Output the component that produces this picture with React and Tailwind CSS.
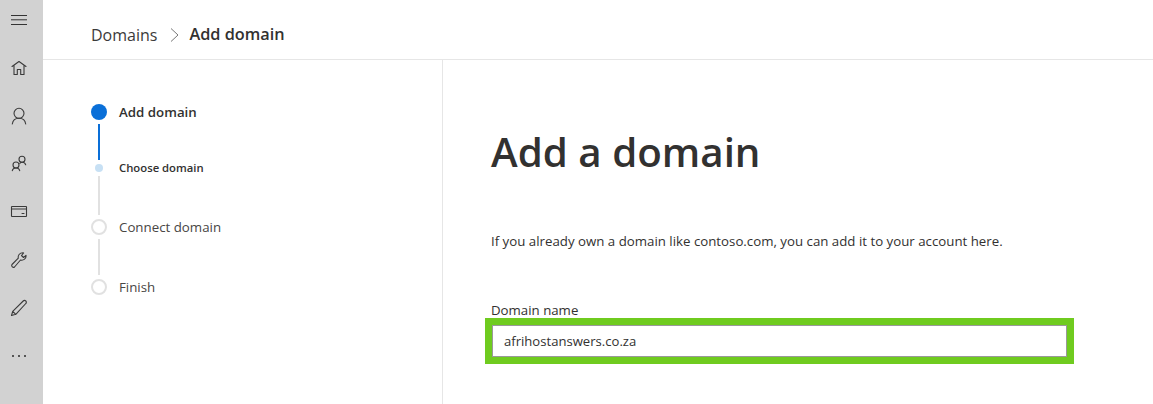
const Ico = ({ children }) => (
  <svg width="20" height="20" viewBox="0 0 20 20" fill="none" stroke="#3a3a3a" strokeWidth="1.1" strokeLinecap="round" strokeLinejoin="round">{children}</svg>
);

const Side = ({ children }) => (
  <div className="h-12 w-full flex items-center justify-center">{children}</div>
);

export default function App() {
  return (
    <div className="flex w-[1153px] h-[404px] overflow-hidden bg-white text-[#323130]" style={{ fontFamily: '"Open Sans", "Noto Sans", sans-serif' }}>
      <nav className="w-[43px] shrink-0 bg-[#d2d2d2] flex flex-col items-center pr-[5px]">
        <div className="h-[40px] mb-[4px] w-full flex items-center justify-center">
          <svg width="16" height="10" viewBox="0 0 16 10" stroke="#333" strokeWidth="1"><path d="M0 .5h16M0 4.800h16M0 9.500h16" /></svg>
        </div>
        <Side><Ico><path d="M3 8.500 10 3.500l7 5M5 7.500V16.500h3.300v-5h3.400v5H15V7.500" /></Ico></Side>
        <Side><Ico><circle cx="10" cy="7.300" r="5" /><path d="M3.300 18c.5-3.600 3-5.700 6.700-5.700s6.200 2.100 6.700 5.700" /></Ico></Side>
        <Side><Ico><circle cx="13" cy="5.300" r="3" /><circle cx="7" cy="11" r="3" /><path d="M3.300 16.700c.3-1.500 1.700-2.700 3.700-2.700s3.400 1.200 3.700 2.700M10.800 9.300c.7-.8 1.500-1 2.300-1 1.900 0 3.200 1 3.600 2.500" /></Ico></Side>
        <Side><Ico><rect x="2.500" y="4.500" width="15" height="10" rx=".5" /><path d="M2.500 7h15M13 11.500h2" /></Ico></Side>
        <Side><Ico><path d="M3 14.500 9.300 8.200C8.700 5.500 10.500 2.800 14 2.800l.6.2-2.100 2.500 2 2 2.500-2.200c.5 3.200-2.500 5.500-5.500 4.700L5.500 17C4 18.200 2 16 3 14.500Z" /></Ico></Side>
        <Side><Ico><path d="M2.500 17.500l1.200-4.200L14.200 3c.8-.8 1.900-.8 2.600 0 .7.700.7 1.800 0 2.500L6.800 16.300 2.500 17.500ZM3.700 13.300l3.100 3" /></Ico></Side>
        <Side><div className="flex gap-[4px]"><span className="w-[2px] h-[2px] bg-[#555]"/><span className="w-[2px] h-[2px] bg-[#555]"/><span className="w-[2px] h-[2px] bg-[#555]"/></div></Side>
      </nav>

      <div className="flex-1 flex flex-col min-w-0">
        <header className="h-[60px] shrink-0 border-b border-[#e6e6e6] flex items-center pl-[48px] text-[16px] pt-[10px]">
          <span className="text-[#3b3a39]">Domains</span>
          <svg width="9" height="14" viewBox="0 0 9 14" fill="none" stroke="#777" className="ml-[13px] mr-[10px]"><path d="M1 .5l7 6.500-7 6.500" /></svg>
          <span className="font-semibold text-[16.300px]">Add domain</span>
        </header>

        <div className="flex flex-1 min-h-0">
          <aside className="w-[400px] shrink-0 border-r border-[#e6e6e6] pt-[44px] pl-[48px]">
            <div className="flex items-center gap-3 h-4">
              <div className="w-4 h-4 rounded-full bg-[#0a6fd8] shrink-0" />
              <span className="text-[13.300px] font-semibold leading-4">Add domain</span>
            </div>
            <div className="ml-[7px] w-[2px] h-[36px] bg-[#0a6fd8] mt-[4px]" />
            <div className="flex items-center h-[8px] mt-[4px]">
              <div className="ml-[4px] w-2 h-2 rounded-full bg-[#c7e0f4] shrink-0" />
              <span className="ml-[16px] text-[11.300px] font-semibold">Choose domain</span>
            </div>
            <div className="ml-[7px] w-[2px] h-[39px] bg-[#e1e1e1] mt-[4px]" />
            <div className="flex items-center gap-3 h-4 mt-[4px]">
              <div className="w-4 h-4 rounded-full border-2 border-[#e1e1e1] shrink-0" />
              <span className="text-[13.300px] leading-4 text-[#484644]">Connect domain</span>
            </div>
            <div className="ml-[7px] w-[2px] h-[36px] bg-[#e1e1e1] mt-[4px]" />
            <div className="flex items-center gap-3 h-4 mt-[4px]">
              <div className="w-4 h-4 rounded-full border-2 border-[#e1e1e1] shrink-0" />
              <span className="text-[13.300px] leading-4 text-[#484644]">Finish</span>
            </div>
          </aside>

          <main className="flex-1 pl-[48px]">
            <h1 className="mt-[63px] text-[40.300px] leading-[58px] font-semibold">Add a domain</h1>
            <p className="mt-[51px] text-[13.270px] leading-[18px]">If you already own a domain like contoso.com, you can add it to your account here.</p>
            <label className="block mt-[52px] text-[13.250px] leading-[17px] text-[#323130]">Domain name</label>
            <div className="-mt-[1px] -ml-[6px] w-[589px] h-[46px] bg-[#6fcb1f] p-[7px]">
              <div className="w-full h-full bg-white border border-[#999] flex items-center pl-[11px] pt-[1px] text-[13.100px]">afrihostanswers.co.za</div>
            </div>
          </main>
        </div>
      </div>
    </div>
  );
}
